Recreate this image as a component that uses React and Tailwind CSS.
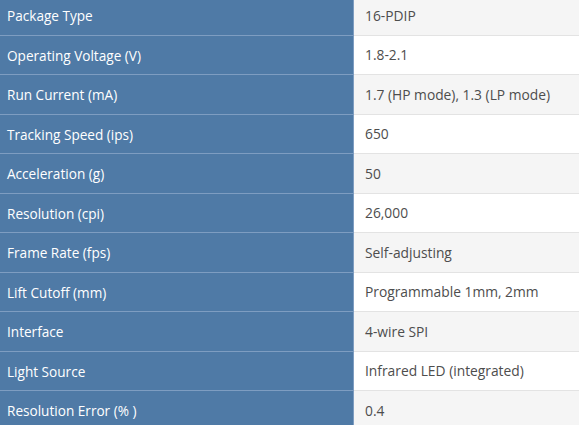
import React from "react";

const rows = [
  ["Package Type", "16-PDIP"],
  ["Operating Voltage (V)", "1.8-2.1"],
  ["Run Current (mA)", "1.7 (HP mode), 1.3 (LP mode)"],
  ["Tracking Speed (ips)", "650"],
  ["Acceleration (g)", "50"],
  ["Resolution (cpi)", "26,000"],
  ["Frame Rate (fps)", "Self-adjusting"],
  ["Lift Cutoff (mm)", "Programmable 1mm, 2mm"],
  ["Interface", "4-wire SPI"],
  ["Light Source", "Infrared LED (integrated)"],
  ["Resolution Error (% )", "0.4"],
];

export default function App() {
  return (
    <div className="w-[579px] h-[425px] overflow-hidden bg-white" style={{ fontFamily: '"Open Sans", "Noto Sans", sans-serif' }}>
      <div className="-mt-[4px] flex flex-col">
        {rows.map(([k, v], i) => (
          <div key={k} className="flex h-[39.5px] shrink-0">
            <div className="w-[354px] shrink-0 bg-[#4f7aa6] border-b border-r border-[#7e9dc1] flex items-center pl-[7px] pt-[2px] text-[13.6px] text-white">
              {k}
            </div>
            <div className={"flex-1 border-b border-[#e3e3e3] flex items-center pl-[11px] pt-[2px] text-[13.8px] text-[#4d4d4d] " + (i % 2 === 0 ? "bg-[#f5f5f5]" : "bg-white")}>
              {v}
            </div>
          </div>
        ))}
      </div>
    </div>
  );
}
